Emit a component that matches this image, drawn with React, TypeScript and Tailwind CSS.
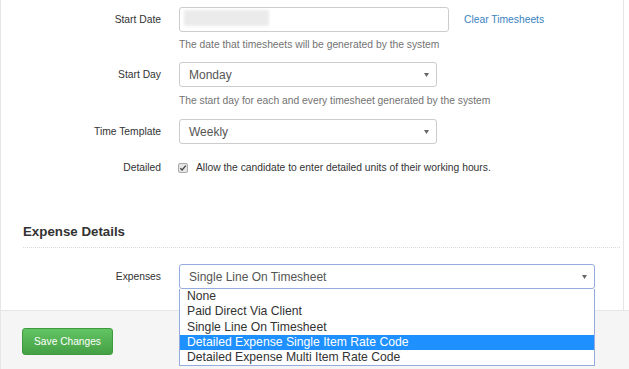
import React from "react";

const labelCls = "w-[160px] shrink-0 text-right text-[10.3px] text-[#333]";
const helpCls = "ml-[178px] text-[10.3px] leading-[13px] text-[#737373]";

const Caret: React.FC = () => (
  <svg width="5" height="4" viewBox="0 0 5 4" className="shrink-0">
    <path d="M0 0 L5 0 L2.5 4 Z" fill="#666" />
  </svg>
);

const SelectBox: React.FC<{ value: string; width: string; focused?: boolean }> = ({
  value,
  width,
  focused,
}) => (
  <div
    className={`flex h-[25px] items-center justify-between rounded-[3px] border bg-white pl-[9px] pr-[7px] text-[12px] text-[#555] ${width} ${
      focused ? "border-[#94abe0]" : "border-[#ccc]"
    }`}
  >
    <span>{value}</span>
    <Caret />
  </div>
);

const expenseOptions = [
  "None",
  "Paid Direct Via Client",
  "Single Line On Timesheet",
  "Detailed Expense Single Item Rate Code",
  "Detailed Expense Multi Item Rate Code",
];

export default function App() {
  return (
    <div
      className="h-[369px] w-[629px] overflow-hidden bg-white"
      style={{ fontFamily: '"Liberation Sans", Arial, sans-serif' }}
    >
      {/* panel body */}
      <div className="w-[624px] border-x border-[#e6e6e6] bg-white pt-[7px] pb-[21px]">
        <div className="flex items-center">
          <div className={labelCls}>Start Date</div>
          <div className="ml-[18px] flex h-[25px] w-[270px] items-start rounded-[3px] border border-[#ccc] bg-white pl-[4px] pt-[2px]">
            <div className="h-[16px] w-[85px] bg-[#ebebeb] blur-[1.5px]" />
          </div>
          <span className="ml-[15px] text-[10.3px] text-[#3a83c0]">Clear Timesheets</span>
        </div>
        <div className={`${helpCls} mt-[6px]`}>
          The date that timesheets will be generated by the system
        </div>

        <div className="mt-[11px] flex items-center">
          <div className={labelCls}>Start Day</div>
          <div className="ml-[18px]">
            <SelectBox value="Monday" width="w-[258px]" />
          </div>
        </div>
        <div className={`${helpCls} mt-[7px]`}>
          The start day for each and every timesheet generated by the system
        </div>

        <div className="mt-[12px] flex items-center">
          <div className={labelCls}>Time Template</div>
          <div className="ml-[18px]">
            <SelectBox value="Weekly" width="w-[258px]" />
          </div>
        </div>

        <div className="mt-[17px] flex h-[13px] items-center">
          <div className={labelCls}>Detailed</div>
          <span className="ml-[17px] flex h-[10px] w-[10px] items-center justify-center rounded-[2px] border border-[#aaa] bg-[#e6e6e6]">
            <svg width="8" height="8" viewBox="0 0 8 8">
              <path d="M1.3 4.2 L3.1 6 L6.8 1.7" fill="none" stroke="#444" strokeWidth="1.3" />
            </svg>
          </span>
          <span className="ml-[8px] text-[10.3px] text-[#333]">
            Allow the candidate to enter detailed units of their working hours.
          </span>
        </div>

        <h3 className="mt-[50px] ml-[22px] text-[13.3px] font-bold leading-[16px] text-[#333]">
          Expense Details
        </h3>
        <div className="mt-[7px] ml-[22px] mr-[3px] border-b border-dotted border-[#dcdcdc]" />

        <div className="mt-[16px] flex items-center">
          <div className={labelCls}>Expenses</div>
          <div className="relative ml-[18px]">
            <SelectBox value="Single Line On Timesheet" width="w-[416px]" focused />
            <ul className="absolute left-0 top-full z-10 w-[416px] border border-t-0 border-[#94abe0] bg-white text-[12.2px] leading-[15.3px] text-[#333]">
              {expenseOptions.map((opt, i) => (
                <li
                  key={opt}
                  className={`pl-[7px] ${i === 3 ? "bg-[#1e90ff] text-white" : ""}`}
                >
                  {opt}
                </li>
              ))}
            </ul>
          </div>
        </div>
      </div>

      {/* panel footer */}
      <div className="h-[59px] w-full border-l border-t border-[#e6e6e6] bg-[#f5f5f5] pl-[21px] pt-[17px]">
        <button className="h-[27px] w-[91px] rounded-[3px] border border-[#3f9a3f] bg-gradient-to-b from-[#62c462] to-[#45a045] text-[10.2px] text-white">
          Save Changes
        </button>
      </div>
    </div>
  );
}
